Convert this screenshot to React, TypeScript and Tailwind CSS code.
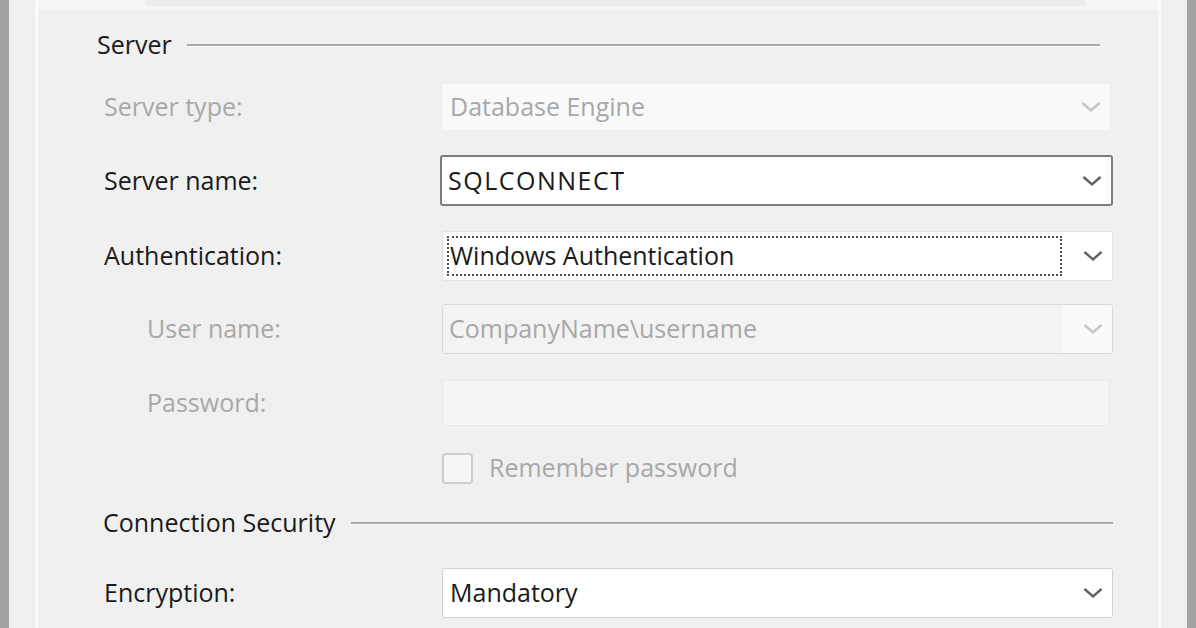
import React from "react";

const font = "font-['Open_Sans','Noto_Sans',sans-serif]";

function Chevron({ muted }: { muted?: boolean }) {
  return (
    <svg width="20" height="12" viewBox="0 0 20 12" className="shrink-0">
      <polyline
        points="1.5,2 10,9.5 18.5,2"
        fill="none"
        stroke={muted ? "#c4c4c4" : "#606060"}
        strokeWidth="2.4"
      />
    </svg>
  );
}

function Heading({ text, lineEnd, pl }: { text: string; lineEnd: string; pl: string }) {
  return (
    <div className={`flex h-[46px] items-center ${pl} ${lineEnd}`}>
      <span className="text-[25px] text-[#1a1a1a]">{text}</span>
      <div className="ml-[15px] flex-1 border-t-2 border-b border-t-[#a9a9a9] border-b-[#fbfbfb]" />
    </div>
  );
}

function Row({
  label,
  disabled,
  indent,
  height,
  mt,
  children,
}: {
  label: string;
  disabled?: boolean;
  indent?: boolean;
  height: string;
  mt: string;
  children: React.ReactNode;
}) {
  return (
    <div className={`flex items-center pl-[66px] ${height} ${mt}`}>
      <div
        className={`w-[338px] shrink-0 text-[25px] ${indent ? "pl-[43px]" : ""} ${
          disabled ? "text-[#a8a8a8]" : "text-[#1a1a1a]"
        }`}
      >
        {label}
      </div>
      {children}
    </div>
  );
}

export default function App() {
  return (
    <div className={`flex h-[628px] w-[1196px] overflow-hidden bg-[#f0f0f0] ${font}`}>
      <div className="w-[9px] shrink-0 bg-[#a3a3a3]" />
      <div className="w-[26px] shrink-0" />
      <div className="flex w-[1126px] shrink-0 flex-col border-x-[3px] border-[#fafafa]">
        {/* blurred bottom edge of the banner above the group */}
        <div className="flex h-[10px] items-start bg-[#f6f6f6] pl-[107px] pr-[72px]">
          <div className="h-[6px] flex-1 rounded-b-[3px] bg-[#eaeaea] opacity-70" />
        </div>

        <div className="mt-[12px]">
          <Heading text="Server" pl="pl-[59px]" lineEnd="pr-[58px]" />
        </div>

        <Row label="Server type:" disabled height="h-[46px]" mt="mt-[16px]">
          <div className="flex h-full w-[668px] items-center justify-between bg-[#f9f9f9] pl-[8px] pr-[9px] text-[25px] text-[#a8a8a8]">
            <span>Database Engine</span>
            <Chevron muted />
          </div>
        </Row>

        <Row label="Server name:" height="h-[51px]" mt="mt-[25px]">
          <div className="-ml-[2px] flex h-full w-[673px] items-center justify-between rounded-[3px] border-2 border-[#7d7d7d] bg-white pl-[6px] pr-[9px] text-[25px] text-[#1a1a1a]">
            <span className="tracking-[1.5px]">SQLCONNECT</span>
            <Chevron />
          </div>
        </Row>

        <Row label="Authentication:" height="h-[50px]" mt="mt-[25px]">
          <div className="flex h-full w-[671px] items-center rounded-[2px] border border-[#e4e4e4] bg-white pr-[9px]">
            <div className="ml-[4px] flex h-[40px] w-[615px] items-center border-2 border-dotted border-[#4d4d4d] pl-[1px] text-[25px] text-[#1a1a1a]">
              Windows Authentication
            </div>
            <div className="flex flex-1 justify-end">
              <Chevron />
            </div>
          </div>
        </Row>

        <Row label="User name:" disabled indent height="h-[50px]" mt="mt-[23px]">
          <div className="flex h-full w-[671px] items-center overflow-hidden rounded-[3px] border border-[#d9d9d9] bg-[#fafafa]">
            <div className="flex h-full w-[620px] items-center bg-[#f3f3f3] pl-[6px] text-[25px] text-[#a8a8a8]">
              CompanyName\username
            </div>
            <div className="flex flex-1 justify-end pr-[9px]">
              <Chevron muted />
            </div>
          </div>
        </Row>

        <Row label="Password:" disabled indent height="h-[46px]" mt="mt-[26px]">
          <div className="h-full w-[668px] border border-[#e9e9e9] bg-[#f5f5f5]" />
        </Row>

        <div className="mt-[26px] flex h-[32px] items-center pl-[404px]">
          <div className="h-[31px] w-[31px] rounded-[4px] border-2 border-[#cdcdcd] bg-[#f6f6f6]" />
          <span className="ml-[16px] text-[25px] text-[#a8a8a8]">Remember password</span>
        </div>

        <div className="mt-[16px]">
          <Heading text="Connection Security" pl="pl-[65px]" lineEnd="pr-[45px]" />
        </div>

        <Row label="Encryption:" height="h-[50px]" mt="mt-[22px]">
          <div className="flex h-full w-[671px] items-center justify-between rounded-[3px] border border-[#d2d2d2] bg-white pl-[7px] pr-[9px] text-[25px] text-[#1a1a1a]">
            <span>Mandatory</span>
            <Chevron />
          </div>
        </Row>
      </div>
      <div className="flex-1" />
      <div className="w-[9px] shrink-0 bg-[#a3a3a3]" />
    </div>
  );
}
